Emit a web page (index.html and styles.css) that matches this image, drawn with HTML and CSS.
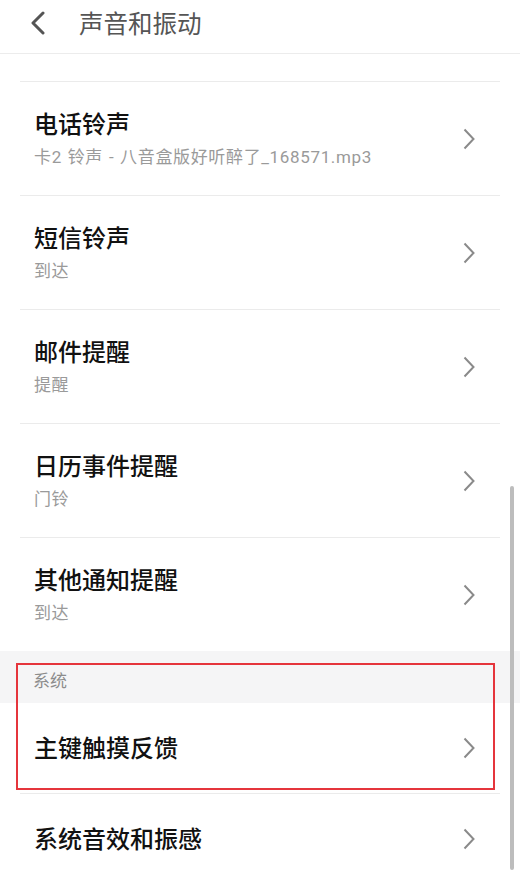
FILE: index.html
```html
<!DOCTYPE html>
<html lang="zh-CN">
<head>
<meta charset="utf-8">
<title>声音和振动</title>
<link rel="stylesheet" href="styles.css">
</head>
<body>
<div class="page">
  <header class="header">
    <svg class="back" width="20" height="24" viewBox="0 0 20 24"><path d="M15 2 L5 12 L15 22" fill="none" stroke="#555" stroke-width="3" stroke-linecap="round" stroke-linejoin="round"/></svg>
    <h1 class="title">声音和振动</h1>
  </header>
  <div class="partial"></div>
  <ul class="list">
    <li class="item">
      <div class="text"><div class="name">电话铃声</div><div class="sub wide">卡2 铃声 - 八音盒版好听醉了_168571.mp3</div></div>
      <svg class="chev" width="12" height="22" viewBox="0 0 12 22"><path d="M1.5 1.5 L10.5 11 L1.5 20.5" fill="none" stroke="#8a8a8a" stroke-width="2"/></svg>
    </li>
    <li class="item">
      <div class="text"><div class="name">短信铃声</div><div class="sub">到达</div></div>
      <svg class="chev" width="12" height="22" viewBox="0 0 12 22"><path d="M1.5 1.5 L10.5 11 L1.5 20.5" fill="none" stroke="#8a8a8a" stroke-width="2"/></svg>
    </li>
    <li class="item">
      <div class="text"><div class="name">邮件提醒</div><div class="sub">提醒</div></div>
      <svg class="chev" width="12" height="22" viewBox="0 0 12 22"><path d="M1.5 1.5 L10.5 11 L1.5 20.5" fill="none" stroke="#8a8a8a" stroke-width="2"/></svg>
    </li>
    <li class="item">
      <div class="text"><div class="name">日历事件提醒</div><div class="sub">门铃</div></div>
      <svg class="chev" width="12" height="22" viewBox="0 0 12 22"><path d="M1.5 1.5 L10.5 11 L1.5 20.5" fill="none" stroke="#8a8a8a" stroke-width="2"/></svg>
    </li>
    <li class="item">
      <div class="text"><div class="name">其他通知提醒</div><div class="sub">到达</div></div>
      <svg class="chev" width="12" height="22" viewBox="0 0 12 22"><path d="M1.5 1.5 L10.5 11 L1.5 20.5" fill="none" stroke="#8a8a8a" stroke-width="2"/></svg>
    </li>
  </ul>
  <div class="section">系统</div>
  <ul class="list">
    <li class="item single first">
      <div class="text"><div class="name">主键触摸反馈</div></div>
      <svg class="chev" width="12" height="22" viewBox="0 0 12 22"><path d="M1.5 1.5 L10.5 11 L1.5 20.5" fill="none" stroke="#8a8a8a" stroke-width="2"/></svg>
    </li>
    <li class="item single">
      <div class="text"><div class="name">系统音效和振感</div></div>
      <svg class="chev" width="12" height="22" viewBox="0 0 12 22"><path d="M1.5 1.5 L10.5 11 L1.5 20.5" fill="none" stroke="#8a8a8a" stroke-width="2"/></svg>
    </li>
  </ul>
  <div class="highlight"></div>
  <div class="scrollbar"></div>
</div>
</body>
</html>
```
FILE: styles.css
```css
html, body {
  margin: 0;
  padding: 0;
  background: #ffffff;
}
body {
  font-family: "Noto Sans CJK SC", "Noto Sans", sans-serif;
  width: 520px;
  height: 882px;
  overflow: hidden;
}
.page {
  position: relative;
  width: 520px;
  height: 882px;
  overflow: hidden;
}
.header {
  height: 53px;
  border-bottom: 1px solid #ececec;
  display: flex;
  align-items: center;
  padding-left: 28px;
  box-sizing: content-box;
}
.back {
  display: block;
  margin-top: -7px;
}
.title {
  margin: -8px 0 0 31px;
  font-size: 24.5px;
  font-weight: 400;
  color: #555555;
  line-height: 30px;
}
.partial {
  height: 27px;
}
.list {
  list-style: none;
  margin: 0;
  padding: 0;
}
.item {
  margin: 0 20px;
  padding: 0 25px 0 14px;
  border-top: 1px solid #ebebeb;
  height: 113px;
  display: flex;
  align-items: center;
  justify-content: space-between;
}
.item.single {
  height: 90px;
  border-top: none;
}
.item.single.first {
  border-bottom: 1px solid #ebebeb;
}
.text {
  display: flex;
  flex-direction: column;
  margin-top: -2px;
}
.name {
  font-size: 24px;
  line-height: 30px;
  font-weight: 500;
  color: #111111;
}
.sub {
  margin-top: 8px;
  font-family: Roboto, "Noto Sans CJK SC", sans-serif;
  font-size: 17px;
  line-height: 22px;
  letter-spacing: 0.4px;
  word-spacing: 1px;
  color: #9a9a9a;
}
.sub.wide {
  letter-spacing: 0.65px;
}
.chev {
  display: block;
  flex: none;
}
.section {
  height: 52px;
  background: #f5f5f6;
  box-sizing: border-box;
  padding: 18px 0 0 33px;
  font-size: 17px;
  line-height: 22px;
  color: #8c8c8c;
}
.highlight {
  position: absolute;
  left: 16px;
  top: 663px;
  width: 479px;
  height: 127px;
  box-sizing: border-box;
  border: 2px solid #e5353c;
}
.scrollbar {
  position: absolute;
  left: 510px;
  top: 486px;
  width: 4px;
  height: 384px;
  border-radius: 2px;
  background: #bdbdbd;
}
```
